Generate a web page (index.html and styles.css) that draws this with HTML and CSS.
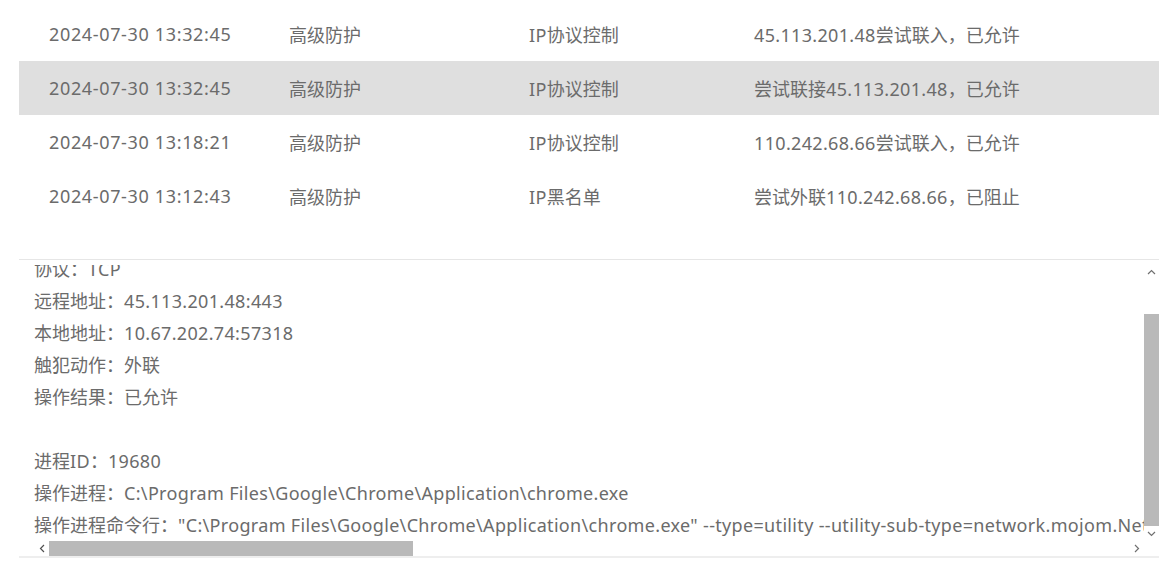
FILE: index.html
```html
<!DOCTYPE html>
<html lang="zh-CN">
<head>
<meta charset="utf-8">
<title>日志</title>
<link rel="stylesheet" href="styles.css">
</head>
<body>
<div class="page">
  <div class="log-table">
    <div class="row">
      <div class="cell c-time">2024-07-30 13:32:45</div>
      <div class="cell c-type">高级防护</div>
      <div class="cell c-rule"><span class="lat">IP</span>协议控制</div>
      <div class="cell c-desc"><span class="lat">45.113.201.48</span>尝试联入，已允许</div>
    </div>
    <div class="row selected">
      <div class="cell c-time">2024-07-30 13:32:45</div>
      <div class="cell c-type">高级防护</div>
      <div class="cell c-rule"><span class="lat">IP</span>协议控制</div>
      <div class="cell c-desc">尝试联接<span class="lat">45.113.201.48</span>，已允许</div>
    </div>
    <div class="row">
      <div class="cell c-time">2024-07-30 13:18:21</div>
      <div class="cell c-type">高级防护</div>
      <div class="cell c-rule"><span class="lat">IP</span>协议控制</div>
      <div class="cell c-desc"><span class="lat">110.242.68.66</span>尝试联入，已允许</div>
    </div>
    <div class="row">
      <div class="cell c-time">2024-07-30 13:12:43</div>
      <div class="cell c-type">高级防护</div>
      <div class="cell c-rule"><span class="lat">IP</span>黑名单</div>
      <div class="cell c-desc">尝试外联<span class="lat">110.242.68.66</span>，已阻止</div>
    </div>
  </div>

  <div class="detail">
    <div class="detail-view">
      <div class="detail-text">
        <div class="line">协议：<span class="lat">TCP</span></div>
        <div class="line">远程地址：<span class="lat">45.113.201.48:443</span></div>
        <div class="line">本地地址：<span class="lat">10.67.202.74:57318</span></div>
        <div class="line">触犯动作：外联</div>
        <div class="line">操作结果：已允许</div>
        <div class="line"></div>
        <div class="line">进程<span class="lat">ID</span>：<span class="lat">19680</span></div>
        <div class="line">操作进程：<span class="lat">C:\Program Files\Google\Chrome\Application\chrome.exe</span></div>
        <div class="line">操作进程命令行：<span class="lat">"C:\Program Files\Google\Chrome\Application\chrome.exe" --type=utility --utility-sub-type=network.mojom.NetworkService --lang=zh-CN --service-sandbox-type=none</span></div>
      </div>
    </div>
    <div class="vscroll">
      <div class="sb-btn sb-up">
        <svg width="9" height="6" viewBox="0 0 9 6"><polyline points="1,5 4.5,1.5 8,5" fill="none" stroke="#707070" stroke-width="1.2"/></svg>
      </div>
      <div class="sb-space"></div>
      <div class="vthumb"></div>
      <div class="sb-btn sb-down">
        <svg width="9" height="6" viewBox="0 0 9 6"><polyline points="1,1 4.5,4.5 8,1" fill="none" stroke="#707070" stroke-width="1.2"/></svg>
      </div>
    </div>
    <div class="hscroll">
      <div class="sb-btn sb-left">
        <svg width="6" height="9" viewBox="0 0 6 9"><polyline points="5,1 1.5,4.5 5,8" fill="none" stroke="#505050" stroke-width="1.2"/></svg>
      </div>
      <div class="hthumb"></div>
      <div class="sb-space"></div>
      <div class="sb-btn sb-right">
        <svg width="6" height="9" viewBox="0 0 6 9"><polyline points="1,1 4.5,4.5 1,8" fill="none" stroke="#707070" stroke-width="1.2"/></svg>
      </div>
    </div>
    <div class="corner"></div>
  </div>
</div>
</body>
</html>
```

FILE: styles.css
```css
html, body {
  margin: 0;
  padding: 0;
  background: #ffffff;
}

body {
  font-family: "Noto Sans", "Noto Sans CJK SC", sans-serif;
  font-size: 18px;
  color: #6b6b6b;
}

.page {
  width: 1140px;
  padding: 7px 0 0 19px;
}

.log-table {
  display: flex;
  flex-direction: column;
}

.row {
  display: flex;
  align-items: center;
  height: 54px;
  padding-left: 30px;
  white-space: nowrap;
}

.row.selected {
  background: #dfdfdf;
}

.c-time {
  width: 240px;
  letter-spacing: 0.65px;
}
.c-type { width: 240px; }
.c-rule { width: 225px; }
.c-desc { flex: 1; }

.lat {
  letter-spacing: 0.33px;
}

.detail {
  margin-top: 36px;
  border-top: 1px solid #e6e6e6;
  border-bottom: 2px solid #eeeeee;
  display: grid;
  grid-template-columns: 1fr 15px;
  grid-template-rows: 281px 15px;
}

.detail-view {
  overflow: hidden;
  padding-left: 15px;
  border-top: 5px solid #ffffff;
}

.detail-text {
  margin-top: -12px;
  white-space: nowrap;
}

.line {
  height: 32px;
  line-height: 32px;
}

.vscroll {
  display: flex;
  flex-direction: column;
}

.sb-btn {
  display: flex;
  align-items: center;
  justify-content: center;
  flex: none;
}

.sb-up {
  height: 24px;
}

.sb-down {
  height: 15px;
}

.sb-space {
  flex: 1;
}

.vthumb {
  height: 212px;
  background: #b9b9b9;
  flex: none;
}

.hscroll {
  display: flex;
  padding-left: 15px;
}

.sb-left,
.sb-right {
  width: 15px;
}

.hthumb {
  width: 364px;
  background: #b9b9b9;
  flex: none;
}

.corner {
  background: #ffffff;
}
```
